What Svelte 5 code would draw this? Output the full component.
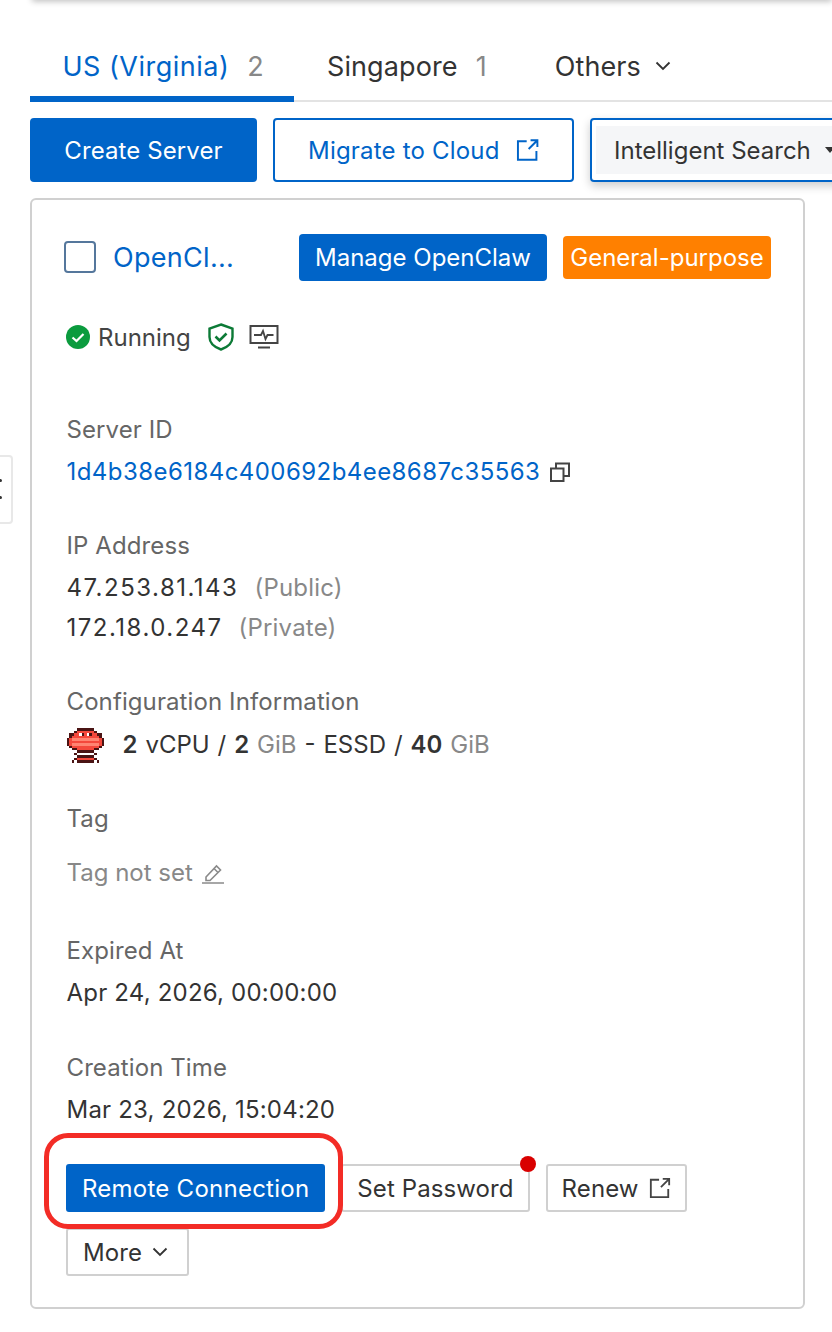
<script>
  const tabs = [
    { name: 'US (Virginia)', count: 2, active: true },
    { name: 'Singapore', count: 1 }
  ];

  // mascot sprite, one letter per pixel
  const sprite = [
    '....ddddddd....',
    '...drrrrrrrd...',
    '.ddrrwdrwdrrdd.',
    '.drrrrrrrrrrrd.',
    'drlllllllllllrd',
    'drrrrrrrrrrrrrd',
    'drlllllllllllrd',
    '.drrrrrrrrrrrd.',
    '..ddrrrrrrrdd..',
    '....ddddddd....',
    '...d.......d...',
    '....ddddddd....',
    '...drrrrrrrd...',
    '..d.ddddddd.d..'
  ];
  const colors = { d: '#4a1414', r: '#f4483c', l: '#ff8472', w: '#ffffff' };
  const pixels = [];
  sprite.forEach((row, y) => {
    [...row].forEach((c, x) => {
      if (c !== '.') pixels.push({ x, y, fill: colors[c] });
    });
  });
</script>

<div class="page">
  <div class="topbar"></div>

  <div class="tabs">
    {#each tabs as tab}
      <div class="tab" class:active={tab.active}>
        <span>{tab.name}</span><span class="count">{tab.count}</span>
      </div>
    {/each}
    <div class="tab others">
      <span>Others</span>
      <svg class="chev" width="16" height="10" viewBox="0 0 16 10"><path d="M1.5 1.5 8 8l6.5-6.5" /></svg>
    </div>
  </div>

  <div class="toolbar">
    <button class="big primary create">Create Server</button>
    <button class="big outline">
      Migrate to Cloud
      <svg class="ext" width="24" height="24" viewBox="0 0 24 24"><path d="M11 3H2v19h19v-9M13 11 22 2M15 2h7v7" /></svg>
    </button>
    <div class="search"><div class="search-inner">Intelligent Search<i class="caret"></i></div></div>
  </div>

  <div class="card">
    <div class="title-row">
      <span class="checkbox"></span>
      <span class="name">OpenCl...</span>
      <button class="manage">Manage OpenClaw</button>
      <span class="tag-orange">General-purpose</span>
    </div>

    <div class="status">
      <svg width="24" height="24" viewBox="0 0 24 24">
        <circle cx="12" cy="12" r="12" fill="#0b9b3e" />
        <path d="M6.5 12.5 10.5 16 17.5 9" fill="none" stroke="#fff" stroke-width="2.2" />
      </svg>
      <span class="running">Running</span>
      <svg class="shield" width="26" height="28" viewBox="0 0 26 28">
        <path d="M13 1.500 24.500 5.500V14c0 6-4.500 10-11.500 12.500C6 24 1.500 20 1.500 14V5.500Z" fill="none" stroke="#0c7a36" stroke-width="2.400" />
        <path d="M7.500 13.500 11.500 17.500 18.500 10.500" fill="none" stroke="#0c7a36" stroke-width="2.600" />
      </svg>
      <svg class="monitor" width="30" height="26" viewBox="0 0 30 26">
        <path d="M1.500 2h27v17h-27zM9 23.500h12" fill="none" stroke="#444" stroke-width="2" />
        <path d="M5 11h7l2-4 2.500 8 2-4h6" fill="none" stroke="#444" stroke-width="1.800" />
      </svg>
    </div>

    <section class="first">
      <div class="label">Server ID</div>
      <div class="value id">
        <span class="link">1d4b38e6184c400692b4ee8687c35563</span>
        <svg width="20" height="20" viewBox="0 0 20 20"><path d="M1 6.500h12.500V19H1zM6 6V1.500h13V14h-5" fill="none" stroke="#444" stroke-width="2" /></svg>
      </div>
    </section>

    <section>
      <div class="label">IP Address</div>
      <div class="value"><span class="addr">47.253.81.143</span><span class="muted ip">(Public)</span></div>
      <div class="value"><span class="addr">172.18.0.247</span><span class="muted ip">(Private)</span></div>
    </section>

    <section>
      <div class="label">Configuration Information</div>
      <div class="value config">
        <svg class="mascot" width="37" height="35" viewBox="0 0 15 14" shape-rendering="crispEdges">
          {#each pixels as p}
            <rect x={p.x} y={p.y} width="1" height="1" fill={p.fill} />
          {/each}
        </svg>
        <span><b>2</b> vCPU / <b>2</b> <span class="muted">GiB</span> - ESSD / <b>40</b> <span class="muted">GiB</span></span>
      </div>
    </section>

    <section>
      <div class="label">Tag</div>
      <div class="value tag-value">
        <span class="muted">Tag not set</span>
        <svg width="22" height="22" viewBox="0 0 22 22"><path d="M4 15 14.500 4l4 4L8 18.500H4ZM12 6.500l4 4M0 21h22" fill="none" stroke="#8a8a8a" stroke-width="1.600" /></svg>
      </div>
    </section>

    <section class="expired">
      <div class="label">Expired At</div>
      <div class="value">Apr 24, 2026, 00:00:00</div>
    </section>

    <section class="created">
      <div class="label">Creation Time</div>
      <div class="value">Mar 23, 2026, 15:04:20</div>
    </section>

    <div class="actions">
      <button class="small primary remote">Remote Connection</button>
      <button class="small dotted">Set Password<i class="dot"></i></button>
      <button class="small renew">
        Renew
        <svg class="ext-dark" width="22" height="22" viewBox="0 0 24 24"><path d="M11 3H2v19h19v-9M13 11 22 2M15 2h7v7" /></svg>
      </button>
      <button class="small more">
        More
        <svg class="chev" width="16" height="10" viewBox="0 0 16 10"><path d="M1.500 1.500 8 8l6.500-6.500" /></svg>
      </button>
    </div>
  </div>

  <div class="handle"><i></i><i></i></div>
  <div class="highlight"></div>
</div>

<style>
  :global(body) {
    margin: 0;
    background: #fff;
    font-family: Inter, "Liberation Sans", sans-serif;
    color: #333;
  }
  .page {
    position: relative;
    width: 832px;
    height: 1332px;
    overflow: hidden;
    padding: 0 0 0 30px;
    box-sizing: border-box;
    font-size: 24px;
  }
  .topbar {
    position: absolute;
    top: -6px;
    left: 32px;
    right: 0;
    height: 6px;
    box-shadow: 0 1px 6px rgba(0, 0, 0, 0.3);
  }

  .tabs {
    display: flex;
    height: 102px;
    box-sizing: border-box;
    border-bottom: 2px solid #e3e3e3;
    padding-top: 38px;
    font-size: 27px;
    letter-spacing: 0.1px;
    color: #333;
  }
  .tab {
    display: flex;
    align-items: center;
    height: 56px;
    padding: 0 33px;
    gap: 14px;
    white-space: nowrap;
  }
  .tab.active {
    color: #0064c8;
    box-shadow: inset 0 -6px 0 #0064c8;
    margin-bottom: -2px;
    height: 64px;
    padding-bottom: 8px;
    padding-left: 32.5px;
    box-sizing: border-box;
    width: 264px;
    letter-spacing: 0.5px;
  }
  .tab.others {
    padding-left: 35px;
  }
  .count {
    color: #888;
    margin-left: 4px;
  }
  .chev {
    fill: none;
    stroke: #333;
    stroke-width: 1.8;
  }

  .toolbar {
    display: flex;
    gap: 16px;
    margin-top: 16px;
    height: 64px;
  }
  button {
    font: inherit;
    cursor: pointer;
    white-space: nowrap;
  }
  .big {
    height: 64px;
    border-radius: 4px;
    padding: 0 33px;
    box-sizing: border-box;
    letter-spacing: 0.1px;
    flex: none;
  }
  .create {
    width: 227px;
    padding: 0;
  }
  .primary {
    background: #0064c8;
    border: 2px solid #0064c8;
    color: #fff;
  }
  .outline {
    background: #fff;
    border: 2px solid #0064c8;
    color: #0064c8;
    display: flex;
    align-items: center;
    gap: 16px;
    width: 301px;
    letter-spacing: 0.2px;
  }
  .ext {
    fill: none;
    stroke: #0064c8;
    stroke-width: 2;
  }
  .ext-dark {
    fill: none;
    stroke: #444;
    stroke-width: 2;
  }
  .search {
    flex: none;
    width: 280px;
    box-sizing: border-box;
    border: 2px solid #0064c8;
    border-radius: 4px;
    padding: 6px 4px;
    box-shadow: 0 4px 10px rgba(0, 0, 0, 0.2);
    background: #fff;
  }
  .search-inner {
    display: flex;
    align-items: center;
    gap: 14px;
    height: 100%;
    padding-left: 18px;
    background: #f5f6f8;
  }
  .caret {
    width: 0;
    height: 0;
    border: 5px solid transparent;
    border-top: 6px solid #333;
    border-bottom: 0;
  }

  .card {
    width: 775px;
    height: 1111px;
    margin-top: 16px;
    box-sizing: border-box;
    border: 2px solid #d0d0d0;
    border-radius: 6px;
    padding: 33px 32px 0 34.5px;
  }
  .title-row {
    display: flex;
    align-items: center;
    height: 48px;
  }
  .checkbox {
    width: 32px;
    height: 32px;
    box-sizing: border-box;
    border: 2px solid #55779c;
    border-radius: 4px;
    flex: none;
    margin-left: -2.5px;
  }
  .name {
    color: #0064c8;
    font-size: 27px;
    letter-spacing: 0.3px;
    margin-left: 17px;
    width: 186px;
  }
  .manage {
    background: #0064c8;
    border: 0;
    color: #fff;
    border-radius: 4px;
    height: 47px;
    width: 248px;
    padding: 0;
  }
  .tag-orange {
    margin-left: 16px;
    background: #ff8000;
    color: #fff;
    border-radius: 4px;
    height: 43px;
    line-height: 43px;
    width: 208px;
    text-align: center;
  }
  .status {
    display: flex;
    align-items: center;
    height: 40px;
    margin-top: 36px;
    margin-left: -0.5px;
  }
  .running {
    margin-left: 8px;
    color: #444;
  }
  .shield {
    margin-left: 17px;
  }
  .monitor {
    margin-left: 15px;
  }

  section {
    margin-top: 34px;
  }
  section.first {
    margin-top: 53px;
  }
  section.expired {
    margin-top: 38px;
  }
  section.created {
    margin-top: 35px;
  }
  .label {
    line-height: 40px;
    margin-bottom: 2px;
    color: #666;
    letter-spacing: 0.1px;
  }
  .value {
    line-height: 40px;
    color: #333;
    letter-spacing: 0.2px;
  }
  .muted {
    color: #888;
  }
  .addr {
    letter-spacing: 1.5px;
  }
  .ip {
    margin-left: 16px;
  }
  .id {
    display: flex;
    align-items: center;
    gap: 10px;
  }
  .link {
    color: #0064c8;
    letter-spacing: 0.44px;
  }
  .config {
    display: flex;
    align-items: center;
    gap: 19px;
    margin-top: 3px;
    letter-spacing: 0;
    word-spacing: 1.2px;
  }
  .mascot {
    flex: none;
  }
  .config b {
    font-weight: 600;
  }
  .tag-value {
    display: flex;
    align-items: center;
    gap: 9px;
    margin-top: 14px;
    letter-spacing: 0;
  }

  .actions {
    display: flex;
    flex-wrap: wrap;
    gap: 16px;
    margin-top: 34px;
    margin-left: -0.5px;
  }
  .small {
    height: 48px;
    box-sizing: border-box;
    padding: 0 14px;
    background: #fff;
    border: 2px solid #d0d0d0;
    border-radius: 3px;
    color: #333;
    display: flex;
    align-items: center;
    gap: 10px;
    letter-spacing: 0.1px;
  }
  .small.primary {
    background: #0064c8;
    border-color: #0064c8;
    color: #fff;
    letter-spacing: 0.25px;
  }
  .more {
    padding: 0 19px 0 15px;
  }
  .dotted {
    position: relative;
  }
  .dot {
    position: absolute;
    top: -10px;
    right: -8px;
    width: 16px;
    height: 16px;
    border-radius: 50%;
    background: #d90000;
  }

  .handle {
    position: absolute;
    left: -5px;
    top: 455px;
    width: 14px;
    height: 65px;
    border: 2px solid #e8e8e8;
    border-radius: 4px;
    background: #fff;
  }
  .handle i {
    position: absolute;
    left: 2px;
    top: 22px;
    width: 3px;
    height: 3px;
    background: #333;
    border-radius: 50%;
  }
  .handle i + i {
    top: 39px;
  }
  .highlight {
    position: absolute;
    left: 44px;
    top: 1133px;
    width: 299px;
    height: 96px;
    box-sizing: border-box;
    border: 5px solid #f32c26;
    border-radius: 24px;
  }
</style>
